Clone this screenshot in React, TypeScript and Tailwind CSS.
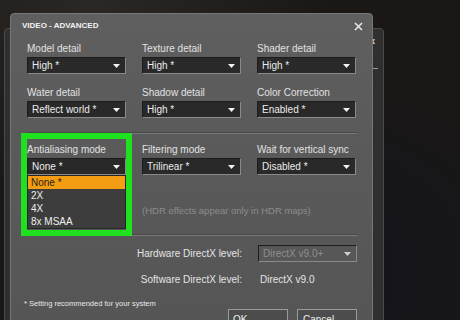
import React from 'react';

const Dropdown: React.FC<{ value: string; disabled?: boolean }> = ({ value, disabled }) => (
  <div
    className={`h-[17px] flex items-center justify-between pl-[4px] pr-[5px] border border-t-[#1c1c1c] border-l-[#1c1c1c] border-b-[#8a8a8a] border-r-[#8a8a8a] ${
      disabled ? 'bg-[#575757] text-[#8e8e8e]' : 'bg-[#292929] text-[#ececec]'
    }`}
  >
    <span className="leading-none">{value}</span>
    <svg width="7" height="4" viewBox="0 0 7 4">
      <path d="M0 0h7L3.5 4z" fill={disabled ? '#cfcfcf' : '#f2f2f2'} />
    </svg>
  </div>
);

const Field: React.FC<{ label: string; value: string }> = ({ label, value }) => (
  <div className="flex flex-col gap-[3px]">
    <span className="leading-[11px] text-[#e2e2e2]">{label}</span>
    <Dropdown value={value} />
  </div>
);

export default function App() {
  return (
    <div className="relative w-[460px] h-[320px] overflow-hidden bg-[#1a1715] font-['Liberation_Sans',Arial,sans-serif] text-[10px]">
      {/* haze + bluish dark lower right */}
      <div className="absolute inset-0 bg-[radial-gradient(ellipse_at_70%_85%,#12141d_0%,transparent_55%)]" />
      <div className="absolute inset-0 bg-[radial-gradient(ellipse_at_20%_0%,#2a2724_0%,transparent_45%)]" />

      {/* window behind */}
      <div className="absolute left-[4px] top-[28px] w-[380px] h-[320px] rounded-t-[4px] bg-[#2f2f2f] border border-[#4a4a4a]">
        <div className="absolute right-[8px] top-[6px] text-[#e0e0e0] text-[9px] font-bold">x</div>
        <div className="absolute right-[5px] top-[39px] w-[6px] h-px bg-[#9a9a9a]" />
      </div>

      {/* main dialog */}
      <div className="absolute left-[10px] top-[13px] w-[363px] h-[330px] rounded-t-[4px] border border-[#777] bg-[linear-gradient(180deg,#5f5f5f_0%,#5a5a5a_40%,#555_100%)] pt-[6px]">
        <div className="flex items-center justify-between pl-[11px] pr-[8px] h-[12px]">
          <span className="text-[8px] font-bold text-[#f2f2f2] leading-[12px]">VIDEO - ADVANCED</span>
          <svg width="9" height="9" viewBox="0 0 9 9" className="mr-[1px]">
            <path d="M1 1l7 7M8 1L1 8" stroke="#e6e6e6" strokeWidth="1.6" />
          </svg>
        </div>

        <div className="pl-[16px] pr-[15px] mt-[11px]">
          <div className="grid grid-cols-[99px_99px_99px] gap-x-[16px] gap-y-[13px]">
            <Field label="Model detail" value="High *" />
            <Field label="Texture detail" value="High *" />
            <Field label="Shader detail" value="High *" />
            <Field label="Water detail" value="Reflect world *" />
            <Field label="Shadow detail" value="High *" />
            <Field label="Color Correction" value="Enabled *" />
          </div>

          <div className="mt-[14px] h-[2px] border-t border-[#484848] border-b-[#7a7a7a] border-b" />

          <div className="grid grid-cols-[99px_99px_99px] gap-x-[16px] mt-[10px]">
            <div className="relative">
              <Field label="Antialiasing mode" value="None *" />
              <div className="absolute left-0 top-[31px] w-[99px] bg-[#3d3d3d] border border-[#262626] z-10">
                <div className="h-[13px] leading-[13px] pl-[3px] bg-[#f39d12] text-[#2a2218]">None *</div>
                <div className="h-[13px] leading-[13px] pl-[3px] text-[#eeeeee]">2X</div>
                <div className="h-[13px] leading-[13px] pl-[3px] text-[#eeeeee]">4X</div>
                <div className="h-[13px] leading-[13px] pl-[3px] text-[#eeeeee]">8x MSAA</div>
              </div>
            </div>
            <div>
              <Field label="Filtering mode" value="Trilinear *" />
              <div className="mt-[30px] whitespace-nowrap text-[9.5px] text-[#8c8c8c] leading-[11px]">
                (HDR effects appear only in HDR maps)
              </div>
            </div>
            <Field label="Wait for vertical sync" value="Disabled *" />
          </div>

          <div className="mt-[18px] h-[2px] border-t border-[#484848] border-b-[#7a7a7a] border-b" />

          <div className="grid grid-cols-[215px_99px] gap-x-[16px] items-center mt-[9px] text-[#e4e4e4]">
            <span className="text-right">Hardware DirectX level:</span>
            <Dropdown value="DirectX v9.0+" disabled />
          </div>
          <div className="grid grid-cols-[215px_99px] gap-x-[16px] items-center mt-[10px] h-[11px] text-[#e4e4e4]">
            <span className="text-right">Software DirectX level:</span>
            <span className="pl-[2px]">DirectX v9.0</span>
          </div>

          <div className="mt-[16px] -ml-[3px] text-[7.5px] text-[#e8e8e8] leading-[10px]">
            * Setting recommended for your system
          </div>

          <div className="flex justify-end gap-[9px] mt-[0px]">
            <div className="w-[60px] h-[20px] border border-[#9a9a9a] bg-[#4c4c4c] text-[#eee] pl-[4px] pt-[2px]">OK</div>
            <div className="w-[60px] h-[20px] border border-[#9a9a9a] bg-[#4c4c4c] text-[#eee] pl-[5px] pt-[2px]">Cancel</div>
          </div>
        </div>

        {/* green highlight */}
        <div className="absolute left-[10px] top-[119px] w-[111px] h-[103px] border-[6px] border-[#1fe11f] z-20" />
      </div>
    </div>
  );
}
